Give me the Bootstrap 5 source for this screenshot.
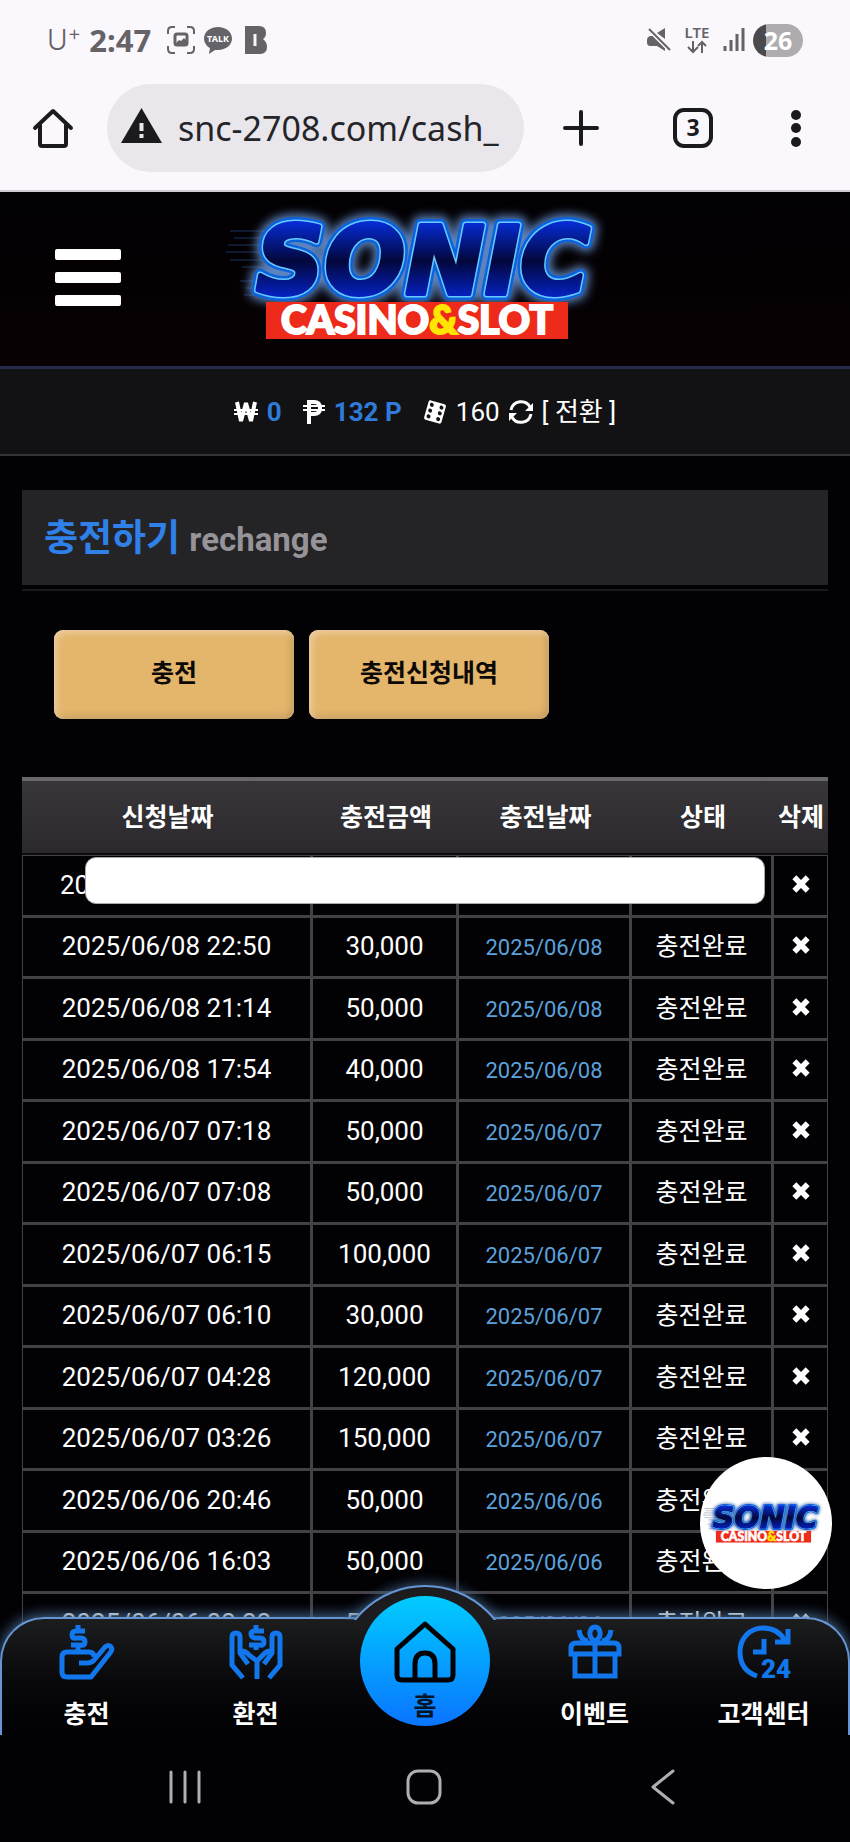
<!DOCTYPE html>
<html lang="ko">

<head>
    <meta charset="UTF-8">
    <meta name="viewport" content="width=device-width, initial-scale=1.0">
    <title>충전하기</title>
    <link href="https://cdn.jsdelivr.net/npm/bootstrap@5.3.0/dist/css/bootstrap.min.css" rel="stylesheet">
    <style>
        body {
            font-family: Roboto, "Noto Sans CJK KR", sans-serif;
            font-size: 25px;
            line-height: 36px;
            color: #fff;
            background: #020104;
        }

        button {
            font: inherit;
            color: inherit;
            background: none;
            border: 0;
            padding: 0;
        }

        svg {
            display: block;
            flex: none;
            overflow: visible;
        }

        /* phone + browser bars */
        .phone-top {
            background: #faf8fd;
            color: #1b1b1f;
            border-bottom: 2px solid #cfcdd4;
        }

        .status-bar {
            height: 80px;
            padding: 0 47px 0 47px;
            color: #656367;
        }

        .carrier {
            font: 300 28px/36px Inter, sans-serif;
        }

        .clock {
            font: 700 31px/36px "Noto Sans", sans-serif;
        }

        .battery {
            width: 50px;
            height: 33px;
            border-radius: 17px;
            background: linear-gradient(90deg, #4c4a4d 25%, #aeacaf 25%);
            color: #fff;
            font: 700 25px/33px "Noto Sans", sans-serif;
            text-align: center;
        }

        .browser-bar {
            padding: 4px 44px 18px 32px;
        }

        .address {
            height: 88px;
            min-width: 0;
            margin: 0 38px 0 33px;
            padding: 0 14px;
            gap: 16px;
            border-radius: 44px;
            background: #e9e7ec;
        }

        .address input {
            min-width: 0;
            width: 100%;
            padding: 0;
            border: 0;
            background: none;
            color: #252529;
            font: 400 34px/48px "Noto Sans", sans-serif;
        }

        .tab-tools {
            gap: 72px;
        }

        /* site header */
        .site-header {
            height: 177px;
            padding: 0 55px 4px;
            border-bottom: 3px solid #252b4a;
            background: linear-gradient(#010003, #080103);
        }

        .menu-btn {
            display: grid;
            gap: 12px;
        }

        .menu-btn span {
            width: 66px;
            height: 11px;
            border-radius: 2px;
            background: #fff;
        }

        .balance {
            height: 87px;
            gap: 9px;
            font-size: 26px;
            background: #121114;
            border-bottom: 2px solid #333235;
        }

        .balance b {
            color: #2f7bd8;
            font-weight: 700;
        }

        .page-wrap {
            padding: 34px 22px 0;
        }

        .page-head {
            height: 95px;
            padding: 4px 22px 0;
            background: #242325;
            box-shadow: 0 4px 0 #020104, 0 6px 0 #1a191b;
        }

        .page-head h1 {
            margin: 0;
            color: #2f80e8;
            font-size: 37px;
            font-weight: 700;
            line-height: 48px;
        }

        .page-head small {
            color: #969498;
            font-size: 33px;
            font-weight: 700;
        }

        .page-tabs {
            gap: 15px;
            padding: 45px 0 58px 32px;
        }

        .gold-btn {
            flex: 0 0 31%;
            height: 89px;
            padding-bottom: 2px;
            border-radius: 9px;
            background: #e3b66c;
            color: #0c0906;
            font-weight: 700;
            box-shadow: inset 3px 3px 6px #edcda0, inset -3px -3px 6px #c39c60;
        }

        /* history table */
        .history {
            width: 100%;
            table-layout: fixed;
            border-collapse: separate;
            border-spacing: 0;
            text-align: center;
            white-space: nowrap;
        }

        .history th {
            height: 78px;
            padding: 2px 0 0;
            border-top: 4px solid #68666a;
            border-bottom: 2px solid #0c0b0e;
            background: linear-gradient(#383639, #2b292d);
            font-weight: 700;
        }

        .history td {
            height: 61px;
            padding: 0;
            border: 0 solid #434145;
            border-width: 0 3px 3px 0;
        }

        .history tr:nth-child(odd) td {
            height: 62px;
        }

        .history tr:first-child td {
            height: 63px;
            border-top-width: 1px;
        }

        .history td:first-child {
            border-left-width: 1px;
        }

        .history td:last-child {
            border-right-width: 1px;
        }

        .history .col-money {
            width: 146px;
        }

        .history .col-paid {
            width: 173px;
        }

        .history .col-state {
            width: 142px;
        }

        .history .col-del {
            width: 54px;
        }

        .history .when,
        .history .amount {
            padding-bottom: 2px;
            font-size: 26px;
        }

        .history .paid {
            padding-top: 2px;
            color: #5ba2dc;
            font-size: 22px;
        }

        .history tr:first-child .when {
            padding-left: 37px;
            text-align: left;
        }

        .notice {
            position: absolute;
            left: 63px;
            right: 63px;
            top: 80px;
            height: 47px;
            border: 1px solid #aaa8ac;
            border-radius: 11px;
            background: #fff;
        }

        .x-icon {
            margin: 4px auto 0;
        }

        /* floating logo and bottom menu */
        .float-logo {
            position: absolute;
            right: 18px;
            bottom: 146px;
            width: 132px;
            height: 132px;
            border-radius: 50%;
            background: #fff;
        }

        .app-nav {
            position: absolute;
            left: 0;
            right: 0;
            bottom: 0;
            height: 118px;
            border: 2px solid #6595d4;
            border-bottom: 0;
            border-radius: 44px 44px 0 0;
            background: linear-gradient(#1c1d1e, #0a0a0c 50%, #020104 90%);
            box-shadow: 0 -2px 14px #45698e;
        }

        .app-nav::before {
            content: "";
            position: absolute;
            top: -34px;
            left: 50%;
            width: 180px;
            height: 180px;
            margin-left: -90px;
            border: 2px solid #6595d4;
            border-radius: 50%;
            background: #1c1c1e;
            box-shadow: 0 0 14px #45698e;
            clip-path: inset(-20px -20px 145px -20px);
        }

        .app-nav a {
            position: relative;
            flex: 1 0 0;
            padding-top: 6px;
            color: #fff;
            font-weight: 700;
            text-decoration: none;
        }

        .app-nav a svg {
            margin-bottom: 18px;
            color: #1277ec;
        }

        .app-nav .home-link {
            flex: 0 0 130px;
            height: 130px;
            margin: -23px 20px 0;
            padding-top: 25px;
            border-radius: 50%;
            background: linear-gradient(#00ccff, #0a74ff);
            color: #061426;
        }

        .app-nav .home-link svg {
            margin-bottom: 6px;
            color: #020104;
        }

        .system-bar {
            height: 107px;
            padding: 0 67px 4px 65px;
            background: #020104;
        }
    </style>
</head>

<body>
    <!-- shared drawings -->
    <svg width="0" height="0" class="position-absolute" aria-hidden="true">
        <defs>
            <linearGradient id="letterFill" x1="0" y1="0" x2="0" y2="1">
                <stop offset="0.1" stop-color="#0630e8"></stop>
                <stop offset="0.5" stop-color="#03073c"></stop>
                <stop offset="0.9" stop-color="#0528e0"></stop>
            </linearGradient>
            <filter id="glow" x="-20%" y="-30%" width="140%" height="160%">
                <feGaussianBlur stdDeviation="5"></feGaussianBlur>
            </filter>
            <symbol id="logo" viewBox="5 2 400 150">
                <g stroke="#1a3560" stroke-width="1">
                    <path d="M10 31h60M14 38h50M8 45h56M6 52h50M10 60h44M22 67h30M20 81h24M26 88h20M24 95h20"></path>
                </g>
                <g font-family="DejaVu Sans, sans-serif" font-weight="700" font-style="italic" font-size="95" stroke-linejoin="round">
                    <text x="36" y="94" fill="#5c83bd" stroke="#5c83bd" stroke-width="18" filter="url(#glow)">SONIC</text>
                    <text x="36" y="94" fill="#0b62dc" stroke="#0b62dc" stroke-width="12">SONIC</text>
                    <text x="36" y="94" fill="#66c8ff" stroke="#66c8ff" stroke-width="7">SONIC</text>
                    <text x="36" y="94" fill="url(#letterFill)" stroke="url(#letterFill)" stroke-width="4">SONIC</text>
                </g>
                <rect x="46" y="102" width="302" height="37" fill="#ee2a1b"></rect>
                <text x="197" y="134" text-anchor="middle" font-family="Lato, sans-serif" font-weight="900" font-size="39" fill="#fff" stroke="#fff" stroke-width="2">CASINO<tspan fill="#ffe500" stroke="#ffe500">&amp;</tspan>SLOT</text>
            </symbol>
            <symbol id="x-mark" viewBox="0 0 18 18">
                <path d="M3 3l12 12M15 3L3 15" stroke="#fff" stroke-width="5"></path>
            </symbol>
        </defs>
    </svg>

    <div class="d-flex flex-column vh-100 overflow-hidden">
        <div class="phone-top">
            <div class="status-bar d-flex align-items-center justify-content-between">
                <div class="d-flex align-items-center gap-2">
                    <span class="carrier">U<sup>+</sup></span>
                    <span class="clock">2:47</span>
                    <svg class="ms-2" width="28" height="28" viewBox="0 0 28 28" fill="none" stroke="currentColor" stroke-width="2">
                        <path d="M1 8V5q0-4 4-4h3M20 1h3q4 0 4 4v3M27 20v3q0 4-4 4h-3M8 27H5q-4 0-4-4v-3"></path>
                        <rect x="8" y="8" width="12" height="11" rx="2" stroke-width="3"></rect>
                        <path d="M9 17l3-3 2 1 3-3 2 2v4H9z" fill="currentColor" stroke="none"></path>
                    </svg>
                    <svg width="30" height="28" viewBox="0 0 30 28">
                        <path d="M15 1c8 0 14 5 14 11.500S23 24 15 24h-3l-6 4 1-6C3 20 1 16 1 12.500 1 6 7 1 15 1z" fill="currentColor"></path>
                        <text x="15" y="16" text-anchor="middle" fill="#fff" font-family="Noto Sans, sans-serif" font-weight="700" font-size="9">TALK</text>
                    </svg>
                    <svg class="ms-1" width="22" height="28" viewBox="0 0 22 28">
                        <path d="M0 0h14q7 0 7 7 0 4-3 6 4 3 4 8 0 7-7 7H0z" fill="currentColor"></path>
                        <path d="M10 8v12" stroke="#faf8fd" stroke-width="3"></path>
                    </svg>
                </div>
                <div class="d-flex align-items-center gap-2">
                    <svg class="me-1" width="24" height="24" viewBox="0 0 24 24" fill="currentColor">
                        <path d="M0 12q0-3 3-4h3l12 11v4l-8-5H3q-3 0-3-4zM10 5l8-5v11z"></path>
                        <path d="M2 1l21 21" stroke="#faf8fd" stroke-width="5"></path>
                        <path d="M2 1l21 21" stroke="currentColor" stroke-width="2"></path>
                    </svg>
                    <svg width="28" height="30" viewBox="0 0 28 30" fill="none" stroke="currentColor" stroke-width="2">
                        <text x="14" y="13" text-anchor="middle" stroke="none" fill="currentColor" font-family="Noto Sans, sans-serif" font-weight="600" font-size="15">LTE</text>
                        <path d="M10 16v11M5 22l5 5 5-5M19 28V17M15 21l4-4 4 4"></path>
                    </svg>
                    <svg class="ms-1" width="22" height="24" viewBox="0 0 22 24" stroke="currentColor" stroke-width="3">
                        <path d="M2 18v5M8 12v11M14 6v17M20 0v23"></path>
                    </svg>
                    <span class="battery">26</span>
                </div>
            </div>
            <div class="browser-bar d-flex align-items-center">
                <button type="button" aria-label="홈페이지">
                    <svg width="42" height="42" viewBox="0 0 42 42" fill="none" stroke="currentColor" stroke-width="4" stroke-linecap="round" stroke-linejoin="round">
                        <path d="M3 21L21 4l18 17M8 18v19q0 2 2 2h22q2 0 2-2V18"></path>
                    </svg>
                </button>
                <div class="address d-flex align-items-center flex-grow-1">
                    <svg width="41" height="46" viewBox="0 0 41 46">
                        <path d="M20.500 3L41 38H0z" fill="currentColor"></path>
                        <path d="M20.500 18v8M20.500 29v4" stroke="#e9e7ec" stroke-width="4"></path>
                    </svg>
                    <input type="text" value="snc-2708.com/cash_" aria-label="주소">
                </div>
                <div class="tab-tools d-flex align-items-center">
                    <button type="button" aria-label="새 탭">
                        <svg width="40" height="40" viewBox="0 0 40 40" stroke="currentColor" stroke-width="4" stroke-linecap="round">
                            <path d="M19 4v32M3 20h32"></path>
                        </svg>
                    </button>
                    <button type="button" aria-label="탭 3개">
                        <svg width="40" height="40" viewBox="0 0 40 40">
                            <rect x="1" y="2" width="36" height="36" rx="9" fill="none" stroke="currentColor" stroke-width="4"></rect>
                            <text x="19" y="28" text-anchor="middle" font-family="Noto Sans, sans-serif" font-weight="700" font-size="23" fill="currentColor">3</text>
                        </svg>
                    </button>
                    <button type="button" aria-label="더보기">
                        <svg width="20" height="40" viewBox="0 0 20 40" fill="currentColor">
                            <circle cx="10" cy="7" r="5"></circle>
                            <circle cx="10" cy="20" r="5"></circle>
                            <circle cx="10" cy="34" r="5"></circle>
                        </svg>
                    </button>
                </div>
            </div>
        </div>

        <main class="position-relative flex-grow-1 overflow-hidden">
            <header class="site-header d-flex align-items-center">
                <div class="col">
                    <button type="button" class="menu-btn" aria-label="메뉴"><span></span><span></span><span></span></button>
                </div>
                <svg width="400" height="150" role="img" aria-label="SONIC CASINO&amp;SLOT"><use href="#logo"></use></svg>
                <div class="col"></div>
            </header>

            <div class="balance d-flex align-items-center justify-content-center">
                <svg width="24" height="20" viewBox="0 0 24 20" fill="none" stroke="#fff">
                    <path d="M3 0l4 19 5-18 5 18 4-19" stroke-width="4" stroke-linejoin="bevel"></path>
                    <path d="M0 8h24M0 12h24" stroke-width="2"></path>
                </svg>
                <b class="me-2">0</b>
                <svg class="ms-1" width="22" height="24" viewBox="0 0 22 24" fill="none" stroke="#fff">
                    <path d="M6 24V2h5q6 0 6 6t-6 6H6" stroke-width="4"></path>
                    <path d="M0 6h22M0 10h22" stroke-width="2"></path>
                </svg>
                <b class="me-2">132 P</b>
                <svg class="ms-1" width="24" height="24" viewBox="0 0 24 24">
                    <g transform="rotate(16 12 12)">
                        <rect x="3" y="2" width="18" height="20" rx="2" fill="#fff"></rect>
                        <g fill="#121114">
                            <circle cx="7" cy="6" r="2"></circle>
                            <circle cx="7" cy="12" r="2"></circle>
                            <circle cx="7" cy="18" r="2"></circle>
                            <circle cx="17" cy="6" r="2"></circle>
                            <circle cx="17" cy="12" r="2"></circle>
                            <circle cx="17" cy="18" r="2"></circle>
                        </g>
                    </g>
                </svg>
                <span>160</span>
                <svg width="24" height="24" viewBox="0 0 24 24" fill="none" stroke="#fff" stroke-width="3">
                    <path d="M2 10C4 0 17-1 21 7M22 14c-2 10-15 11-19 3"></path>
                    <path d="M24 3v8h-8zM0 21v-8h8z" fill="#fff" stroke="none"></path>
                </svg>
                <button type="button">[ 전환 ]</button>
            </div>

            <div class="page-wrap">
                <div class="page-head d-flex align-items-center">
                    <h1>충전하기 <small>rechange</small></h1>
                </div>
                <div class="page-tabs d-flex">
                    <button type="button" class="gold-btn">충전</button>
                    <button type="button" class="gold-btn">충전신청내역</button>
                </div>

                <div class="position-relative">
                    <table class="history">
                        <thead>
                            <tr>
                                <th>신청날짜</th>
                                <th class="col-money">충전금액</th>
                                <th class="col-paid">충전날짜</th>
                                <th class="col-state">상태</th>
                                <th class="col-del">삭제</th>
                            </tr>
                        </thead>
                        <tbody id="historyRows"></tbody>
                    </table>
                    <div class="notice"></div>
                </div>
            </div>

            <a href="#" class="float-logo d-flex align-items-center justify-content-center" aria-label="SONIC">
                <svg width="126" height="48"><use href="#logo"></use></svg>
            </a>

            <nav class="app-nav d-flex">
                <a href="#" class="d-flex flex-column align-items-center">
                    <svg width="54" height="54" viewBox="0 0 54 54" fill="none" stroke="currentColor" stroke-width="5" stroke-linejoin="round">
                        <path d="M25 6h-9q-4 0-4 4t4 3h5q4 0 4 4t-4 3h-10M18 0v6M18 20v7M19 38h8q5 0 8-4l10-12q4-3 6 0 2 3-1 6L31 52H7q-5 0-5-5V32q0-5 5-5h22q5 0 5 5"></path>
                    </svg>
                    충전
                </a>
                <a href="#" class="d-flex flex-column align-items-center">
                    <svg width="54" height="54" viewBox="0 0 54 54" fill="none" stroke="currentColor" stroke-width="5">
                        <path d="M35 6h-9q-4 0-4 3t4 4h5q4 0 4 4t-4 3H20M27 0v6M27 20v5"></path>
                        <path d="M14 53L3 40V12q0-4 4-4t4 4v16l8 11M10 28q5-4 10 2l8 6v18M40 53l11-13V12q0-4-4-4t-4 4v16l-8 11M44 28q-5-4-10 2l-6 6"></path>
                    </svg>
                    환전
                </a>
                <a href="#" class="home-link d-flex flex-column align-items-center">
                    <svg width="62" height="62" viewBox="0 0 62 62" fill="none" stroke="currentColor" stroke-width="5" stroke-linejoin="round">
                        <path d="M31 3L3 28v26q0 5 5 5h46q5 0 5-5V28zM21 59V43q0-11 10-11t10 11v16"></path>
                    </svg>
                    홈
                </a>
                <a href="#" class="d-flex flex-column align-items-center">
                    <svg width="54" height="54" viewBox="0 0 54 54" fill="none" stroke="currentColor" stroke-width="5">
                        <path d="M3 29v-6q0-5 5-5h38q5 0 5 5v6zM7 29v22h40V29M27 18v34M27 16q-6-3-5-9 1-5 5-5t5 5q1 6-5 9zM11 5q1 10 9 11M43 5q-1 10-9 11"></path>
                    </svg>
                    이벤트
                </a>
                <a href="#" class="d-flex flex-column align-items-center">
                    <svg width="54" height="54" viewBox="0 0 54 54" fill="none" stroke="currentColor" stroke-width="5">
                        <path d="M20 51C8 47 3 38 3 27 3 13 13 3 26 3c10 0 18 5 22 13"></path>
                        <path d="M51 4v13H38M27 14v13H16"></path>
                        <text x="24" y="53" font-family="Roboto, sans-serif" font-weight="900" font-size="26" fill="currentColor" stroke="none">24</text>
                    </svg>
                    고객센터
                </a>
            </nav>
        </main>

        <div class="system-bar d-flex align-items-center">
            <button type="button" class="col d-flex justify-content-center" aria-label="최근 앱">
                <svg width="34" height="34" viewBox="0 0 34 34" stroke="#b0aeb2" stroke-width="3" stroke-linecap="round">
                    <path d="M3 2v30M17 2v30M31 2v30"></path>
                </svg>
            </button>
            <button type="button" class="col d-flex justify-content-center" aria-label="홈 화면">
                <svg width="36" height="36" viewBox="0 0 36 36" fill="none" stroke="#b0aeb2" stroke-width="3">
                    <rect x="2" y="2" width="32" height="32" rx="10"></rect>
                </svg>
            </button>
            <button type="button" class="col d-flex justify-content-center" aria-label="뒤로">
                <svg width="24" height="36" viewBox="0 0 24 36" fill="none" stroke="#b0aeb2" stroke-width="3" stroke-linecap="round" stroke-linejoin="round">
                    <path d="M22 2L2 18l20 16"></path>
                </svg>
            </button>
        </div>
    </div>

    <script src="https://cdn.jsdelivr.net/npm/bootstrap@5.3.0/dist/js/bootstrap.bundle.min.js"></script>

    <script>
        const rows = [
            ['20', '', '', ''],
            ['2025/06/08 22:50', '30,000', '2025/06/08', '충전완료'],
            ['2025/06/08 21:14', '50,000', '2025/06/08', '충전완료'],
            ['2025/06/08 17:54', '40,000', '2025/06/08', '충전완료'],
            ['2025/06/07 07:18', '50,000', '2025/06/07', '충전완료'],
            ['2025/06/07 07:08', '50,000', '2025/06/07', '충전완료'],
            ['2025/06/07 06:15', '100,000', '2025/06/07', '충전완료'],
            ['2025/06/07 06:10', '30,000', '2025/06/07', '충전완료'],
            ['2025/06/07 04:28', '120,000', '2025/06/07', '충전완료'],
            ['2025/06/07 03:26', '150,000', '2025/06/07', '충전완료'],
            ['2025/06/06 20:46', '50,000', '2025/06/06', '충전완료'],
            ['2025/06/06 16:03', '50,000', '2025/06/06', '충전완료'],
            ['2025/06/06 02:22', '50,000', '2025/06/06', '충전완료']
        ];

        document.getElementById('historyRows').innerHTML = rows.map(row => `
            <tr>
                <td class="when">${row[0]}</td>
                <td class="amount">${row[1]}</td>
                <td class="paid">${row[2]}</td>
                <td>${row[3]}</td>
                <td><button type="button" class="w-100" aria-label="삭제"><svg class="x-icon" width="20" height="20"><use href="#x-mark"></use></svg></button></td>
            </tr>`).join('');
    </script>
</body>

</html>
